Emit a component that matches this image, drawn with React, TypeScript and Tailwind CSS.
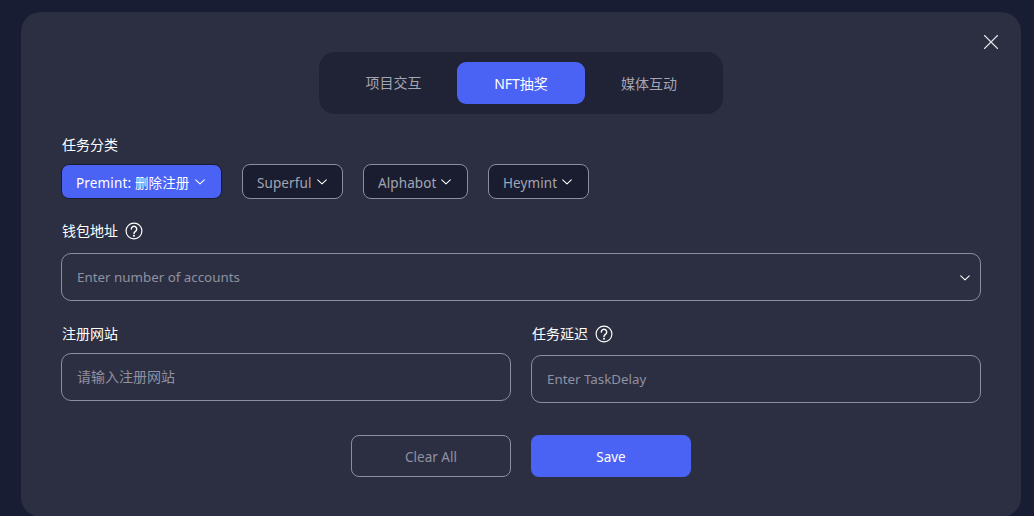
import React from "react";

const font = { fontFamily: '"Noto Sans", "Noto Sans CJK SC", sans-serif' };

function Chevron() {
  return (
    <svg viewBox="0 0 10 6" fill="none" stroke="currentColor" strokeWidth="1.05" strokeLinecap="round" strokeLinejoin="round" className="w-[10px] h-[6px] shrink-0 text-white">
      <path d="M.7.8L5 4.9 9.3.8" />
    </svg>
  );
}

function Help() {
  return (
    <svg viewBox="0 0 20 20" fill="none" stroke="#fff" className="w-[18px] h-[18px] shrink-0">
      <circle cx="10" cy="10" r="8.8" strokeWidth="1.3" />
      <path d="M7 7.8a3 3 0 1 1 4.6 2.6c-1.1.7-1.6 1.2-1.6 2.4" strokeWidth="1.6" strokeLinecap="round" />
      <circle cx="10" cy="15.3" r="1.1" fill="#fff" stroke="none" />
    </svg>
  );
}

function Chip({ label, className }: { label: string; className: string }) {
  return (
    <button className={`h-[35px] pl-[14px] flex items-center gap-[5px] rounded-[8px] border border-[#8c8e9f] bg-[#1a1c2f] text-[13.5px] tracking-[0.1px] text-[#a3a5b3] ${className}`}>
      <span className="pt-[3px]">{label}</span>
      <Chevron />
    </button>
  );
}

export default function App() {
  return (
    <div style={font} className="w-[1034px] h-[516px] overflow-hidden bg-[#191d33] pt-[12px] pl-[21px]">
      <div className="relative w-[1000px] h-[505px] rounded-[20px] bg-[#2c2f41] px-[40px] pt-[40px]">
        <button className="absolute top-[22px] right-[22px] text-[#e6e6ea]">
          <svg viewBox="0 0 16 16" className="w-[16px] h-[16px]" fill="none" stroke="currentColor" strokeWidth="1.1" strokeLinecap="round">
            <path d="M1.5 1.5l13 13M14.5 1.5l-13 13" />
          </svg>
        </button>

        <div className="flex justify-center">
          <div className="flex p-[10px] rounded-[16px] bg-[#202335] text-[14px]">
            <div className="w-[128px] h-[42px] flex items-center justify-center pb-[1px] pl-[1px] text-[#a3a5b3]">项目交互</div>
            <div className="w-[128px] h-[42px] flex items-center justify-center rounded-[9px] bg-[#4a63f5] text-white">NFT抽奖</div>
            <div className="w-[128px] h-[42px] flex items-center justify-center text-[#a3a5b3]">媒体互动</div>
          </div>
        </div>

        <div className="mt-[20px] h-[20px] flex items-center pl-[1px] text-[14px] text-white">任务分类</div>

        <div className="mt-[10px] flex items-center gap-[20px]">
          <button className="h-[35px] w-[161px] pl-[14px] flex items-center gap-[5px] rounded-[8px] border border-[#1a1c2f] bg-[#4a63f5] text-[13.5px] tracking-[0.15px] text-white">
            <span className="pt-[3px]">Premint: 删除注册</span>
            <Chevron />
          </button>
          <Chip label="Superful" className="w-[101px]" />
          <Chip label="Alphabot" className="w-[105px]" />
          <Chip label="Heymint" className="w-[101px]" />
        </div>

        <div className="mt-[22px] h-[20px] flex items-center gap-[7px] pl-[1px] text-[14px] text-white">
          <span className="pb-[1px]">钱包地址</span>
          <Help />
        </div>

        <div className="mt-[12px] h-[48px] flex items-center justify-between pl-[15px] pr-[10px] rounded-[10px] border border-[#8c8e9f] text-[13.35px] text-[#8f91a1]">
          <span className="pt-[1px]">Enter number of accounts</span>
          <span className="pt-[1px]"><Chevron /></span>
        </div>

        <div className="mt-[23px] grid grid-cols-2 gap-[20px]">
          <div>
            <div className="h-[20px] flex items-center pb-[1px] pl-[1px] text-[14px] text-white">注册网站</div>
            <div className="mt-[9px] h-[48px] flex items-center px-[15px] pb-[1px] rounded-[10px] border border-[#8c8e9f] text-[14px] text-[#8f91a1]">请输入注册网站</div>
          </div>
          <div>
            <div className="h-[20px] flex items-center gap-[7px] pl-[1px] text-[14px] text-white">
              <span className="pb-[2px]">任务延迟</span>
              <Help />
            </div>
            <div className="mt-[11px] h-[48px] flex items-center px-[15px] pt-[1px] rounded-[10px] border border-[#8c8e9f] text-[13.35px] text-[#8f91a1]">Enter TaskDelay</div>
          </div>
        </div>

        <div className="mt-[32px] flex justify-center gap-[20px] text-[13.5px]">
          <button className="w-[160px] h-[42px] pt-[3px] rounded-[8px] border border-[#8c8e9f] text-[#8f91a1]">Clear All</button>
          <button className="w-[160px] h-[42px] pt-[3px] rounded-[8px] bg-[#4a63f5] text-white">Save</button>
        </div>
      </div>
    </div>
  );
}
